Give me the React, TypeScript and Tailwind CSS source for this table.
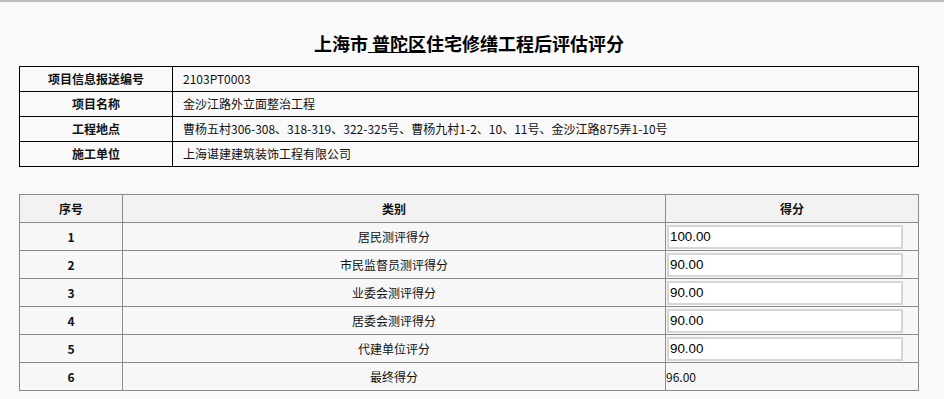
import React from 'react';

// Project info rows
const info = [
	{ label: '项目信息报送编号', value: '2103PT0003' },
	{ label: '项目名称', value: '金沙江路外立面整治工程' },
	{ label: '工程地点', value: '曹杨五村306-308、318-319、322-325号、曹杨九村1-2、10、11号、金沙江路875弄1-10号' },
	{ label: '施工单位', value: '上海谌建建筑装饰工程有限公司' }
];

// Score rows
const scores = [
	{ no: 1, name: '居民测评得分', score: '100.00' },
	{ no: 2, name: '市民监督员测评得分', score: '90.00' },
	{ no: 3, name: '业委会测评得分', score: '90.00' },
	{ no: 4, name: '居委会测评得分', score: '90.00' },
	{ no: 5, name: '代建单位评分', score: '90.00' }
];

export default function App() {
	return (
		<div
			className="min-h-[399px] bg-[#f9f9f9] border-t-2 border-[#bdbdbd] text-[#111] text-[12px]"
			style={{ fontFamily: '"Microsoft YaHei", "Noto Sans CJK SC", sans-serif' }}
		>
			<div className="w-[900px] ml-[19px]">
				<h1 className="pt-[29px] h-[64px] text-center text-[18px] leading-[24px] font-bold text-black">
					上海市<u> 普陀区</u>住宅修缮工程后评估评分
				</h1>

				<table className="w-[900px] border-collapse border border-black">
					<colgroup>
						<col className="w-[153px]" />
						<col />
					</colgroup>
					<tbody>
						{info.map((row) => (
							<tr key={row.label} className="h-[25px]">
								<td className="border border-black text-center font-bold p-0">{row.label}</td>
								<td className="border border-black pl-[10px] p-0">{row.value}</td>
							</tr>
						))}
					</tbody>
				</table>

				<table className="mt-[27px] w-[900px] border-collapse border border-[#8a8a8a]">
					<colgroup>
						<col className="w-[103px]" />
						<col className="w-[543px]" />
						<col />
					</colgroup>
					<thead>
						<tr className="h-[28px] bg-[#f2f2f2]">
							<th className="border border-[#8a8a8a] font-bold p-0">序号</th>
							<th className="border border-[#8a8a8a] font-bold p-0">类别</th>
							<th className="border border-[#8a8a8a] font-bold p-0">得分</th>
						</tr>
					</thead>
					<tbody>
						{scores.map((row) => (
							<tr key={row.no} className="h-[28px] bg-[#f7f7f7]">
								<td className="border border-[#8a8a8a] text-center font-bold p-0">{row.no}</td>
								<td className="border border-[#8a8a8a] text-center p-0">{row.name}</td>
								<td className="border border-[#8a8a8a] pl-[1px] p-0">
									<input
										readOnly
										value={row.score}
										className="block w-[236px] h-[24px] bg-white border-2 border-[#d6d6d6] px-[1px] text-[13.33px] text-black outline-none"
										style={{ fontFamily: '"Liberation Sans", Arial, sans-serif' }}
									/>
								</td>
							</tr>
						))}
						<tr className="h-[28px] bg-[#f7f7f7]">
							<td className="border border-[#8a8a8a] text-center font-bold p-0">6</td>
							<td className="border border-[#8a8a8a] text-center p-0">最终得分</td>
							<td className="border border-[#8a8a8a] p-0">96.00</td>
						</tr>
					</tbody>
				</table>
			</div>
		</div>
	);
}
